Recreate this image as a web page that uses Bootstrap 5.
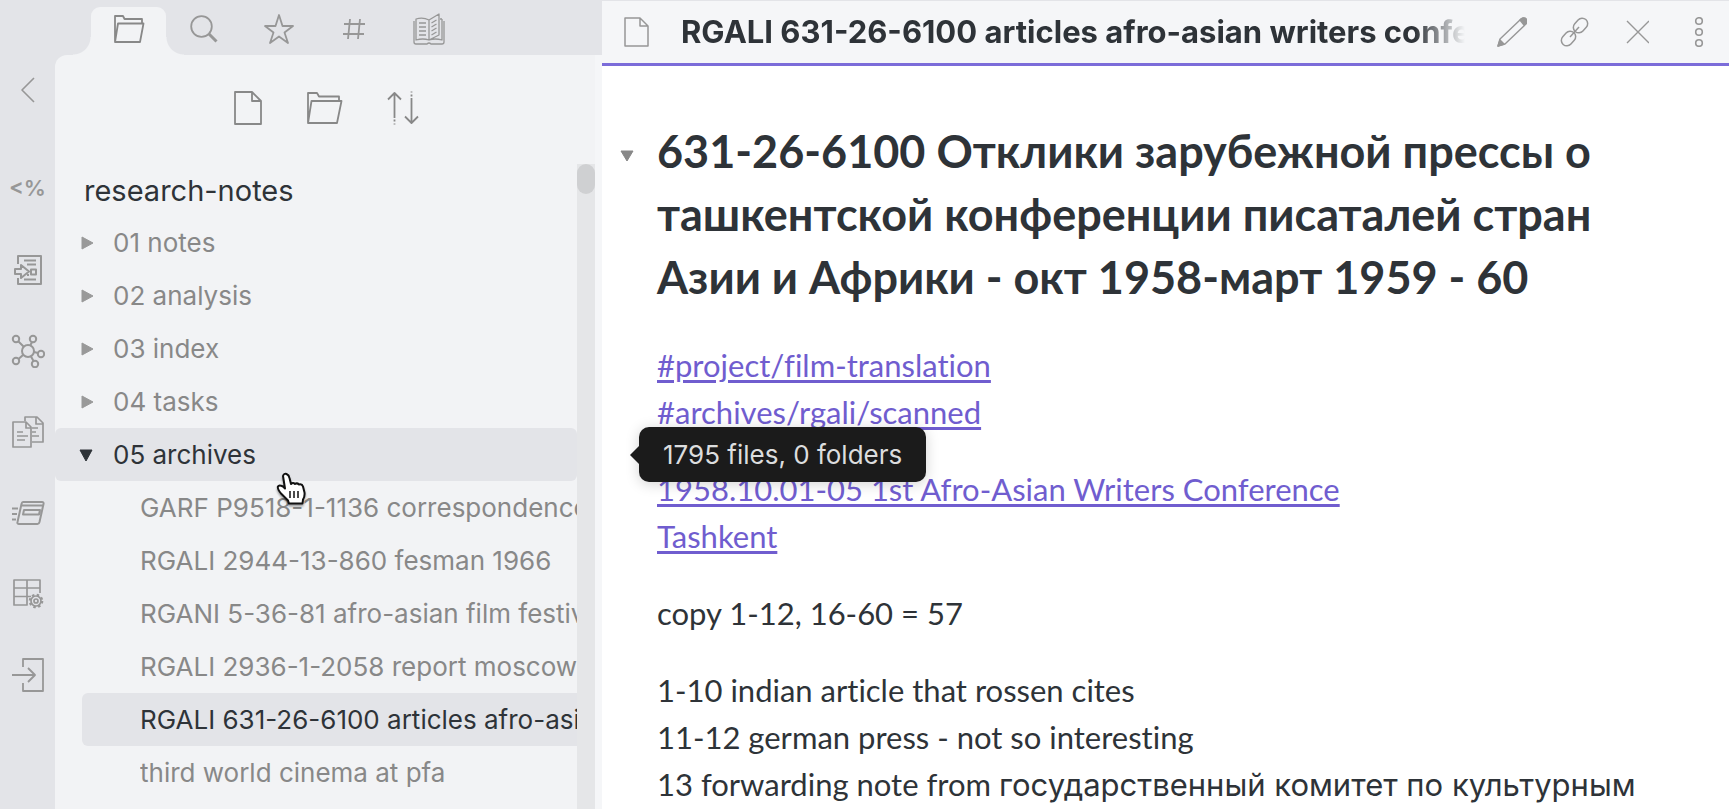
<!DOCTYPE html>
<html lang="en">
<head>
<meta charset="utf-8">
<meta name="viewport" content="width=device-width, initial-scale=1">
<title>research-notes</title>
<link href="https://cdn.jsdelivr.net/npm/bootstrap@5.3.0/dist/css/bootstrap.min.css" rel="stylesheet">
<style>
:root { --chrome:#e3e4e8; --panel:#f2f3f5; --ink:#2e3338; --muted:#888; --icon:#979797; --accent:#705dcf; --row:53px; }
body { font-family:Inter,"Noto Sans",sans-serif; color:var(--ink); background:#fff; }
button { border:0; background:none; padding:0; color:inherit; }
svg { display:block; fill:none; stroke:currentColor; stroke-linejoin:round; flex:none; }
.side { flex:0 0 602px; min-width:0; background:var(--chrome); color:var(--icon); }
.shrinkable { min-width:0; }
.ribbon { flex:0 0 55px; padding-top:75px; }
.ribbon button { height:81px; width:55px; display:flex; align-items:center; justify-content:center; }
.ribbon .fold { height:30px; margin-bottom:43px; }
.ribbon .tpl { font-size:22px; font-weight:600; }
.tabstrip { height:55px; padding:7px 0 0 36px; }
.tabstrip button { width:75px; display:flex; align-items:center; justify-content:center; padding-bottom:4px; }
.tabstrip .active { position:relative; background:var(--panel); border-radius:9px 9px 0 0; color:#888; }
.tabstrip .active::before, .tabstrip .active::after { content:""; position:absolute; bottom:0; width:18px; height:18px; }
.tabstrip .active::before { right:100%; background:radial-gradient(circle at 0 0,transparent 17px,var(--panel) 18px); }
.tabstrip .active::after { left:100%; background:radial-gradient(circle at 100% 0,transparent 17px,var(--panel) 18px); }
.files { background:var(--panel); border-top-left-radius:12px; }
.gutter { flex:0 0 7px; background:#f5f6f8; }
.actions { height:106px; gap:44px; padding-left:2px; color:#888; }
.vault { font-size:29px; line-height:48px; padding-left:29px; margin:0; font-weight:400; color:var(--ink); }
.pane { padding-top:6px; }
.track { flex:0 0 18px; margin-top:3px; background:#e5e6e8; }
.thumb { height:30px; border-radius:9px; background:#cfd0d2; }
.tree { font-size:26px; line-height:var(--row); color:var(--muted); padding-top:1px; }
.tree li { position:relative; }
.tree button { height:var(--row); display:flex; align-items:center; width:100%; text-align:left; padding-left:24px; }
.tree button > svg { width:16px; margin-right:18px; fill:#999; stroke:#999; }
.tree .hover { background:var(--chrome); color:var(--ink); border-radius:6px; }
.tree .hover > svg { fill:var(--ink); stroke:var(--ink); }
.tree .file { margin-left:27px; width:calc(100% - 27px); padding-left:58px; border-radius:6px 0 0 6px; }
.tree .file.active { background:var(--chrome); color:var(--ink); }
.clip { overflow:hidden; white-space:nowrap; }
.tip { position:absolute; z-index:5; left:584px; top:-1px; height:55px; line-height:55px; padding:0 24px; border-radius:10px; background:#1b1b1b; color:#dcddde; white-space:nowrap; box-shadow:0 2px 14px rgba(0,0,0,.18); }
.tip::before { content:""; position:absolute; right:100%; top:19px; border:9px solid transparent; border-right-color:#1b1b1b; border-left:0; }
.pointer { position:absolute; z-index:6; left:221px; top:44px; filter:drop-shadow(0 2px 1px rgba(0,0,0,.35)); }
.topbar { height:66px; border-top:1px solid #e3e4e8; border-bottom:3px solid #7b6cd9; background:#f5f6f8; padding:0 20px 0 22px; color:var(--icon); }
.doc-title { font-size:31px; font-weight:700; color:var(--ink); margin:0 32px; line-height:60px; -webkit-mask-image:linear-gradient(to left,transparent,#000 50px); mask-image:linear-gradient(to left,transparent,#000 50px); }
.tools { gap:30px; }
.note { font-family:Lato,"Open Sans",sans-serif; font-size:31px; line-height:47px; padding:54px 40px 0 55px; font-variant-ligatures:none; }
.note h1 { font-size:45px; line-height:63px; font-weight:700; margin:0 0 33px; position:relative; white-space:nowrap; }
.note p { margin:0 0 30px; white-space:nowrap; }
.note a { color:var(--accent); text-decoration:underline; text-decoration-thickness:3px; text-underline-offset:3px; }
.note .cyr { font-family:Inter,sans-serif; }
.caret { position:absolute; right:100%; top:30px; margin-right:23px; color:#888; fill:#888; }
</style>
</head>
<body class="d-flex vh-100 overflow-hidden">
<aside class="side d-flex">
  <nav class="ribbon d-flex flex-column" aria-label="Ribbon">
    <button class="fold" aria-label="Collapse"><svg width="14" height="26" stroke-width="1.6"><path d="M13 1 1 13 13 25"/></svg></button>
    <button class="tpl" aria-label="Templates">&lt;%</button>
    <button aria-label="Insert"><svg width="30" height="32" stroke-width="2"><path d="M5 10V2h23v28H5v-6M11 6.500h12M14 10.500h9M11 25.500h12M14 21h2M2 15h6v-4l8 6.500-8 6.500v-4H2zM18 15.500h5v5h-5z"/></svg></button>
    <button aria-label="Graph"><svg width="34" height="34" stroke-width="2"><circle cx="17" cy="17" r="6"/><circle cx="5" cy="5" r="3.200"/><circle cx="22" cy="5" r="3.200"/><circle cx="30" cy="20" r="3.200"/><circle cx="24" cy="30" r="3.200"/><circle cx="5" cy="27" r="3.200"/><path d="m7.500 7.500 5 5M21 8l-2 4M23 18l4 1M20 22.500l2.500 4.500M12 21l-4.500 4"/></svg></button>
    <button aria-label="Copy"><svg width="32" height="32" stroke-width="1.700"><path d="M1 6h13l5 5v20H1zM14 6v6h5M13 5V1h12l6 6v19H20M24 1v7h7M5 16h6M5 20h11M5 24h8M20 12h6M20 16h4M20 20h7"/></svg></button>
    <button aria-label="Cards"><svg width="34" height="24" stroke-width="2"><path d="M12 1h19q2 0 1.500 2l-4 18q-.5 2-2 2H8q-2 0-1.500-2l4-18Q11 1 12 1zM10 4.500h22M13 9h16l-1 4.500H12zM1 7.500h6M1 13h5M1 18.500h4"/></svg></button>
    <button aria-label="Table settings"><svg width="32" height="30" stroke-width="1.700"><path d="M28 14V1H2v25h13V1M2 9h26M2 17.500h17"/><circle cx="24" cy="22" r="5"/><circle cx="24" cy="22" r="2"/><circle cx="24" cy="22" r="6.200" stroke-dasharray="2.435 2.435" stroke-width="2.200"/></svg></button>
    <button aria-label="Exit"><svg width="34" height="34" stroke-width="1.800"><path d="M12 9V1h20v32H12v-8M1 17h22M17 10l7 7-7 7"/></svg></button>
  </nav>
  <div class="flex-grow-1 d-flex flex-column shrinkable">
    <div class="tabstrip d-flex" role="tablist">
      <button class="active" role="tab" aria-label="Files"><svg width="32" height="28" stroke-width="1.800"><path d="M2 27V1h8l1.500 3H29v4M2 27 5 8.500h25.500L27 27z"/></svg></button>
      <button role="tab" aria-label="Search"><svg width="28" height="28" stroke-width="1.800"><circle cx="11.500" cy="11.500" r="10.300"/><path d="m19 19 7.500 7.500" stroke-width="3"/></svg></button>
      <button role="tab" aria-label="Starred"><svg width="32" height="32" stroke-width="1.800" stroke-linejoin="miter"><path d="m16 2 3.500 11H30l-8.500 6.500L25 30l-9-6.500L7 30l3.500-10.500L2 13h10.500z"/></svg></button>
      <button role="tab" aria-label="Tags"><svg width="22" height="22" stroke-width="1.800"><path d="M7 1 5 21M17 1l-2 20M1 6h21M0 16h21"/></svg></button>
      <button role="tab" aria-label="Outline"><svg width="32" height="32" stroke-width="1.300"><path d="M1 8v21q0 2 2 2h11q2-2 4 0h11q2 0 2-2V8M3 6q7-2 13 1v20q-6-2-13 0zM16 27V7l10-6v21zM29 6v21q-7-2-13 0M27 6h2M6 10h7M6 14h7M6 18h7M6 22h7M18.500 10l5-3M18.500 14l5-3M18.500 18l5-3M18.500 22l5-3"/></svg></button>
    </div>
    <div class="flex-grow-1 d-flex shrinkable">
      <div class="files flex-grow-1 d-flex flex-column shrinkable">
        <div class="actions d-flex justify-content-center align-items-center">
          <button aria-label="New note"><svg width="28" height="34" stroke-width="1.800" stroke-linejoin="miter"><path d="M1 1h17l9 9v23H1zM18 1v9h9"/></svg></button>
          <button aria-label="New folder"><svg width="37" height="32" stroke-width="1.800"><path d="M2 31V1h9l2 3.500h20V9M2 31 5.500 9h30L31 31z"/></svg></button>
          <button aria-label="Sort"><svg width="32" height="34" stroke-width="1.800"><path d="M7.500 27V2M1 8.500 7.500 2 14 8.500M24.500 7v25M18 25.500l6.500 6.500 6.500-6.500"/><path stroke-dasharray="2 2" d="M7.500 28.500v5M24.500 5.500v-5"/></svg></button>
        </div>
        <div class="d-flex flex-grow-1 shrinkable">
          <div class="pane flex-grow-1 shrinkable">
            <h2 class="vault">research-notes</h2>
            <ul class="tree list-unstyled mb-0">
              <li><button><svg height="16"><path d="m3 2 11 6-11 6z"/></svg>01 notes</button></li>
              <li><button><svg height="16"><path d="m3 2 11 6-11 6z"/></svg>02 analysis</button></li>
              <li><button><svg height="16"><path d="m3 2 11 6-11 6z"/></svg>03 index</button></li>
              <li><button><svg height="16"><path d="m3 2 11 6-11 6z"/></svg>04 tasks</button></li>
              <li><button class="hover" aria-expanded="true" aria-describedby="tip"><svg height="16"><path d="M1 3h12L7 14z"/></svg>05 archives</button>
                <span class="tip" id="tip" role="tooltip">1795 files, 0 folders</span>
                <svg class="pointer" width="32" height="36" viewBox="0 0 32 36"><path fill="#fff" stroke="#111" stroke-width="2" d="M7 4q1-3 3.500-2t3 4l1.500 6q2-2 4 0 2-1.500 4 .5 3-1 4 2l1.500 6q.5 4-1.500 7l-.5 4H13l-1-3-7-7q-4-5-3-7t5 0l2 2z"/><path stroke="#111" stroke-width="1.500" d="M14 19v7M18 19v7M22 19v7"/></svg></li>
              <li><button class="file"><span class="clip">GARF P9518-1-1136 correspondence</span></button></li>
              <li><button class="file"><span class="clip">RGALI 2944-13-860 fesman 1966</span></button></li>
              <li><button class="file"><span class="clip">RGANI 5-36-81 afro-asian film festiv</span></button></li>
              <li><button class="file"><span class="clip">RGALI 2936-1-2058 report moscow</span></button></li>
              <li><button class="file active"><span class="clip">RGALI 631-26-6100 articles afro-asi</span></button></li>
              <li><button class="file"><span class="clip">third world cinema at pfa</span></button></li>
            </ul>
          </div>
          <div class="track"><div class="thumb"></div></div>
        </div>
      </div>
      <div class="gutter"></div>
    </div>
  </div>
</aside>
<main class="flex-grow-1 shrinkable">
  <header class="topbar d-flex align-items-center">
    <svg width="25" height="30" stroke-width="1.500" stroke-linejoin="miter"><path d="M1 1h15l8 8v20H1zM16 1v8h8"/></svg>
    <div class="doc-title clip flex-grow-1">RGALI 631-26-6100 articles afro-asian writers confe</div>
    <div class="tools d-flex align-items-center">
      <button aria-label="Edit"><svg width="30" height="32" stroke-width="1.400"><path d="M1 30 3 23 24 3q3-2 5 0t0 5L8 28z"/><path d="M5.500 25.500 26.500 5.500" stroke="#f5f6f8" stroke-width="2.500"/><path fill="currentColor" d="m1 30 2-6 4 4zM24 3q3-2 5 0t0 4l-2 2-4-5z"/></svg></button>
      <button aria-label="Link"><svg width="32" height="30" stroke-width="1.500"><rect x="-8" y="-5.500" width="16" height="11" rx="5.500" transform="translate(23.500 8.500) rotate(-48)"/><rect x="-8" y="-5.500" width="16" height="11" rx="5.500" transform="translate(11.500 21.500) rotate(-48)"/><path d="m13 20 9-10"/></svg></button>
      <button aria-label="Close"><svg width="30" height="26" stroke-width="1.400"><path d="m8 2 22 22M30 2 8 24"/></svg></button>
      <button aria-label="More"><svg width="30" height="30" stroke-width="1.600"><circle cx="20" cy="4" r="3.300"/><circle cx="20" cy="15" r="3.300"/><circle cx="20" cy="26" r="3.300"/></svg></button>
    </div>
  </header>
  <article class="note">
    <h1><svg class="caret" width="14" height="12"><path d="M1 1h12L7 11z"/></svg>631-26-6100 Отклики зарубежной прессы о<br>ташкентской конференции писаталей стран<br>Азии и Африки - окт 1958-март 1959 - 60</h1>
    <p><a href="#">#project/film-translation</a><br><a href="#">#archives/rgali/scanned</a></p>
    <p><a href="#">1958.10.01-05 1st Afro-Asian Writers Conference<br>Tashkent</a></p>
    <p>copy 1-12, 16-60 = 57</p>
    <p>1-10 indian article that rossen cites<br>11-12 german press - not so interesting<br>13 forwarding note from <span class="cyr">государственный комитет по культурным</span></p>
  </article>
</main>
<script src="https://cdn.jsdelivr.net/npm/bootstrap@5.3.0/dist/js/bootstrap.bundle.min.js"></script>
</body>
</html>
